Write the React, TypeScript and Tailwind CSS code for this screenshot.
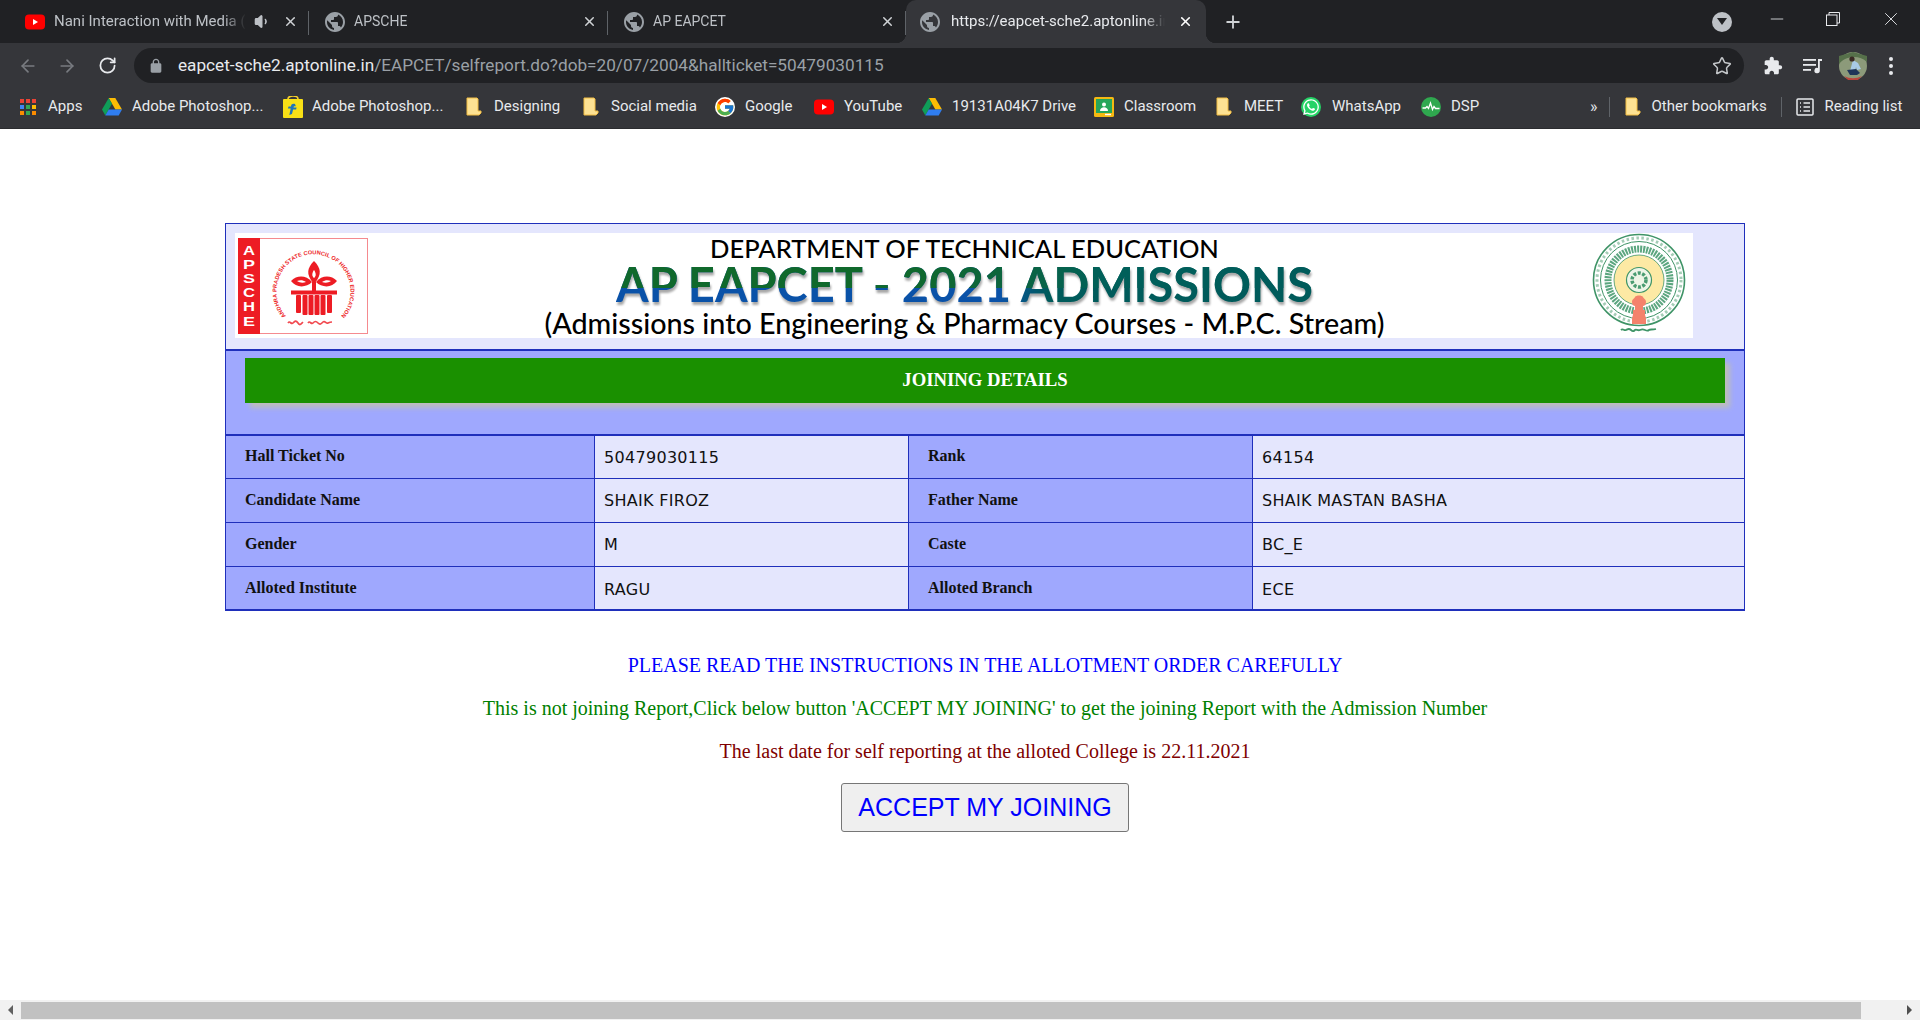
import type { ReactNode } from "react";
import { ArrowLeft, ArrowRight, RotateCw, Star, X, Plus, Minus, Volume1 } from "lucide-react";
import { FcGoogle } from "react-icons/fc";
import { FaWhatsapp } from "react-icons/fa";

const chromeFont = "font-['Roboto',sans-serif]";

function Globe() {
  return (
    <svg viewBox="2 2 20 20" className="w-5 h-5 shrink-0" fill="#9aa0a6">
      <path d="M12 2C6.48 2 2 6.48 2 12s4.48 10 10 10 10-4.48 10-10S17.52 2 12 2zm-1 17.93c-3.95-.49-7-3.85-7-7.93 0-.62.08-1.21.21-1.79L9 15v1c0 1.1.9 2 2 2v1.93zm6.9-2.54c-.26-.81-1-1.39-1.9-1.39h-1v-3c0-.55-.45-1-1-1H8v-2h2c.55 0 1-.45 1-1V7h2c1.1 0 2-.9 2-2v-.41c2.93 1.19 5 4.06 5 7.41 0 2.08-.8 3.97-2.1 5.39z" />
    </svg>
  );
}

function YouTubeIcon() {
  return (
    <svg viewBox="0 0 20 20" className="w-5 h-5 shrink-0">
      <rect x="0" y="2.5" width="20" height="15" rx="4" fill="#f00" />
      <path d="M8 7l5 3-5 3z" fill="#fff" />
    </svg>
  );
}

function DriveIcon() {
  return (
    <svg viewBox="0 0 20 18" className="w-5 h-[18px] shrink-0">
      <path d="M6.7 0h6.6l6.7 11.6h-6.6z" fill="#fbbc04" />
      <path d="M6.7 0L0 11.6l3.3 5.8L10 5.8z" fill="#0f9d58" />
      <path d="M6.7 11.6H20l-3.3 5.8H3.3z" fill="#2f7df0" />
    </svg>
  );
}

function Folder() {
  return (
    <svg viewBox="0 0 16 19" className="w-4 h-[19px] shrink-0">
      <path d="M1 1h10l1 1v12h3v2l-2 2H1z" fill="#fde293" stroke="#f2bd42" strokeWidth="1" />
    </svg>
  );
}

function FlipkartIcon() {
  return (
    <svg viewBox="0 0 20 22" className="w-5 h-[22px] shrink-0">
      <path d="M5 3c0-4 10-4 10 0" fill="none" stroke="#f7d02c" strokeWidth="1.6" />
      <rect x="0" y="3" width="20" height="19" rx="1" fill="#f8e016" />
      <path d="M12 8c-3-.6-4 .8-4 2.6H5.5l-.6 1.8h2.8L6.3 19l2.7-1 1.1-4.600h3l.5-1.800h-3.100c.1-1.200.8-1.600 2.300-1.300z" fill="#1f74ba" />
    </svg>
  );
}

function ClassroomIcon() {
  return (
    <svg viewBox="0 0 20 20" className="w-5 h-5 shrink-0">
      <rect width="20" height="20" rx="1.5" fill="#f5b912" />
      <rect x="2" y="2" width="16" height="14" fill="#26a65b" />
      <circle cx="10" cy="7.500" r="2" fill="#fff" />
      <path d="M6 14c0-5 8-5 8 0z" fill="#fff" />
      <rect x="11" y="16.800" width="6" height="1.400" fill="#fff" />
    </svg>
  );
}

function WhatsAppIcon() {
  return (
    <span className="w-5 h-5 shrink-0 rounded-full bg-[#25d366] flex items-center justify-center">
      <FaWhatsapp className="w-[18px] h-[18px] text-white" />
    </span>
  );
}

function DspIcon() {
  return (
    <svg viewBox="0 0 20 20" className="w-5 h-5 shrink-0">
      <circle cx="10" cy="10" r="10" fill="#2fa84f" />
      <path d="M1.500 11h3l1.500-1.500 1.500 2 2-5.500 2 6.500 1.500-3 1.500 2h4" fill="none" stroke="#fff" strokeWidth="1.300" />
    </svg>
  );
}

function AppsIcon() {
  const colors = ["#ea4335", "#ea4335", "#ea4335", "#4285f4", "#34a853", "#fbbc04", "#fb8c00", "#34a853", "#fb8c00"];
  return (
    <span className="grid grid-cols-3 gap-[2px] w-4 h-4 shrink-0">
      {colors.map((c, i) => (
        <span key={i} className="block" style={{ backgroundColor: c }} />
      ))}
    </span>
  );
}

type Bookmark = { label: string; icon: ReactNode; itemW: string; iconW: string };

const bookmarks: Bookmark[] = [
  { label: "Apps", icon: <AppsIcon />, itemW: "w-[82px]", iconW: "w-[28px]" },
  { label: "Adobe Photoshop...", icon: <DriveIcon />, itemW: "w-[181px]", iconW: "w-[30px]" },
  { label: "Adobe Photoshop...", icon: <FlipkartIcon />, itemW: "w-[183px]", iconW: "w-[29px]" },
  { label: "Designing", icon: <Folder />, itemW: "w-[117px]", iconW: "w-[28px]" },
  { label: "Social media", icon: <Folder />, itemW: "w-[132px]", iconW: "w-[28px]" },
  { label: "Google", icon: <FcGoogle className="w-5 h-5 shrink-0 bg-white rounded-full" />, itemW: "w-[99px]", iconW: "w-[30px]" },
  { label: "YouTube", icon: <YouTubeIcon />, itemW: "w-[108px]", iconW: "w-[30px]" },
  { label: "19131A04K7 Drive", icon: <DriveIcon />, itemW: "w-[172px]", iconW: "w-[30px]" },
  { label: "Classroom", icon: <ClassroomIcon />, itemW: "w-[122px]", iconW: "w-[30px]" },
  { label: "MEET", icon: <Folder />, itemW: "w-[85px]", iconW: "w-[28px]" },
  { label: "WhatsApp", icon: <WhatsAppIcon />, itemW: "w-[120px]", iconW: "w-[31px]" },
  { label: "DSP", icon: <DspIcon />, itemW: "w-[60px]", iconW: "w-[30px]" },
];

function Tab({ title, icon, extra, wide, size }: { title: string; icon: ReactNode; extra?: ReactNode; wide: string; size: string }) {
  return (
    <div className={`relative flex items-center h-[43px] pl-4 pr-[11px] ${wide}`}>
      {icon}
      <span className={`ml-[9px] flex-1 min-w-0 overflow-hidden whitespace-nowrap text-[#bdc1c6] [mask-image:linear-gradient(to_right,black_88%,transparent)] ${size}`}>
        {title}
      </span>
      {extra}
      <X size={15} strokeWidth={2.4} className="ml-[12px] shrink-0 text-[#d0d3d6]" />
      <span className="absolute right-0 top-[11px] h-[24px] w-px bg-[#5f6368]" />
    </div>
  );
}

function TabStrip() {
  return (
    <div className="flex items-start h-[43px] pl-[9px] bg-[#202124]">
      <Tab
        wide="w-[300px]"
        size="text-[15px]"
        title="Nani Interaction with Media ("
        icon={<YouTubeIcon />}
        extra={<Volume1 size={17} fill="#bdc1c6" className="ml-2 shrink-0 text-[#bdc1c6]" />}
      />
      <Tab wide="w-[299px]" size="text-[14px]" title="APSCHE" icon={<Globe />} />
      <Tab wide="w-[298px]" size="text-[14px]" title="AP EAPCET" icon={<Globe />} />
      <div className="relative flex items-center w-[300px] h-[43px] pl-[14px] pr-[13px] rounded-t-[10px] bg-[#35363a]">
        <span className="absolute -left-[10px] bottom-0 w-[10px] h-[10px] bg-[radial-gradient(circle_at_0_0,transparent_10px,#35363a_10.500px)]" />
        <span className="absolute -right-[10px] bottom-0 w-[10px] h-[10px] bg-[radial-gradient(circle_at_100%_0,transparent_10px,#35363a_10.500px)]" />
        <Globe />
        <span className="ml-[11px] flex-1 min-w-0 overflow-hidden whitespace-nowrap text-[15px] text-[#e8eaed] [mask-image:linear-gradient(to_right,black_90%,transparent)]">
          https://eapcet-sche2.aptonline.in/
        </span>
        <X size={15} strokeWidth={2.6} className="ml-[13px] shrink-0 text-white" />
      </div>
      <Plus size={20} strokeWidth={2.2} className="ml-[17px] mt-[12px] text-[#d0d3d6]" />

      <div className="ml-auto flex items-center h-[43px]">
        <span className="w-5 h-5 rounded-full bg-[#bdc1c6] flex items-center justify-center">
          <span className="w-0 h-0 border-x-[5px] border-x-transparent border-t-[7px] border-t-[#202124]" />
        </span>
        <Minus size={20} strokeWidth={1} className="ml-[35px] mb-[6px] text-[#e8eaed]" />
        <svg viewBox="0 0 14 14" className="ml-[39px] mb-[6px] w-[14px] h-[14px]" fill="none" stroke="#e8eaed" strokeWidth="1">
          <rect x="0.500" y="3" width="10.500" height="10.500" />
          <path d="M3 3V0.500h10.500V11H11" />
        </svg>
        <X size={22} strokeWidth={1} className="ml-[40px] mr-[18px] mb-[6px] text-[#e8eaed]" />
      </div>
    </div>
  );
}

function Toolbar() {
  return (
    <div className="flex items-center h-[45px] bg-[#35363a]">
      <ArrowLeft size={20} strokeWidth={2} className="ml-[18px] text-[#787b80]" />
      <ArrowRight size={20} strokeWidth={2} className="ml-[19px] text-[#787b80]" />
      <RotateCw size={19} strokeWidth={2.2} className="ml-[21px] text-[#e8eaed]" />
      <div className="ml-[17px] flex items-center w-[1610px] h-[35px] rounded-full bg-[#202124]">
        <svg viewBox="0 0 24 24" className="ml-[14px] w-4 h-4" fill="#9aa0a6">
          <path d="M18 8h-1V6c0-2.760-2.240-5-5-5S7 3.240 7 6v2H6c-1.100 0-2 .9-2 2v10c0 1.100.9 2 2 2h12c1.100 0 2-.9 2-2V10c0-1.100-.9-2-2-2zM9 6c0-1.660 1.340-3 3-3s3 1.340 3 3v2H9V6z" />
        </svg>
        <span className="ml-[14px] whitespace-nowrap text-[17.2px] text-[#e8eaed]">
          eapcet-sche2.aptonline.in
          <span className="text-[#9aa0a6]">/EAPCET/selfreport.do?dob=20/07/2004&amp;hallticket=50479030115</span>
        </span>
        <Star size={20} strokeWidth={1.8} className="ml-auto mr-[12px] text-[#c4c7ca]" />
      </div>
      <svg viewBox="0 0 24 24" className="ml-[19px] w-5 h-5" fill="#e8eaed">
        <path d="M20.500 11H19V7c0-1.100-.9-2-2-2h-4V3.500C13 2.120 11.880 1 10.500 1S8 2.120 8 3.500V5H4c-1.100 0-1.990.9-1.990 2v3.800H3.500c1.490 0 2.700 1.210 2.700 2.700s-1.210 2.700-2.700 2.700H2V20c0 1.100.9 2 2 2h3.800v-1.500c0-1.490 1.210-2.700 2.700-2.700 1.490 0 2.700 1.210 2.700 2.700V22H17c1.100 0 2-.9 2-2v-4h1.500c1.380 0 2.500-1.120 2.500-2.500S21.880 11 20.500 11z" />
      </svg>
      <svg viewBox="0 0 20 20" className="ml-[20px] w-5 h-5" fill="#e8eaed">
        <rect x="0" y="3" width="13" height="1.800" />
        <rect x="0" y="8" width="13" height="1.800" />
        <rect x="0" y="13" width="8" height="1.800" />
        <path d="M15 3h4v2h-2.200v9.500a2.700 2.700 0 1 1-1.800-2.500z" />
      </svg>
      <svg viewBox="0 0 28 28" className="ml-[16px] w-7 h-7">
        <circle cx="14" cy="14" r="14" fill="#8c9a7a" />
        <path d="M0 12C6 4 20 2 28 10V4L14 0 0 4z" fill="#56704a" />
        <path d="M14 8l5 3 3 6-4 1-1-3-1 4-5 0z" fill="#a9cbe6" />
        <circle cx="13" cy="7" r="2.600" fill="#3a2a24" />
        <path d="M8 18l9-1 4 4-3 2-7 0z" fill="#1f3559" />
        <path d="M5 24c6 3 12 3 18 0l-4 4H9z" fill="#b9453c" />
      </svg>
      <span className="ml-[22px] flex flex-col gap-[3px]">
        <span className="w-1 h-1 rounded-full bg-[#e8eaed]" />
        <span className="w-1 h-1 rounded-full bg-[#e8eaed]" />
        <span className="w-1 h-1 rounded-full bg-[#e8eaed]" />
      </span>
    </div>
  );
}

function BookmarksBar() {
  return (
    <div className="flex items-center h-[41px] pl-5 pb-[3px] bg-[#35363a] border-b border-[#2b2c2f] text-[15px] text-[#e8eaed]">
      {bookmarks.map((b, i) => (
        <div key={i} className={`flex items-center shrink-0 whitespace-nowrap ${b.itemW}`}>
          <span className={`flex items-center shrink-0 ${b.iconW}`}>{b.icon}</span>
          {b.label}
        </div>
      ))}
      <span className="ml-[109px] text-[16px] leading-none">»</span>
      <span className="ml-[11px] w-px h-[20px] bg-[#5f6368]" />
      <span className="ml-[15px] flex items-center w-[27px]"><Folder /></span>
      <span className="whitespace-nowrap w-[129px]">Other bookmarks</span>
      <span className="w-px h-[20px] bg-[#5f6368]" />
      <svg viewBox="0 0 18 18" className="ml-[14px] w-[18px] h-[18px]" fill="none" stroke="#e8eaed" strokeWidth="1.500">
        <rect x="1" y="1" width="16" height="16" rx="1" />
        <path d="M4 5h1M7.500 5H14M4 9h1M7.500 9H14M4 13h1M7.500 13H14" />
      </svg>
      <span className="ml-[11px] whitespace-nowrap">Reading list</span>
    </div>
  );
}

function ApscheLogo() {
  return (
    <svg viewBox="0 0 130 96" className="ml-[3px] w-[130px] h-[96px] shrink-0">
      <rect x="0.500" y="0.500" width="129" height="95" fill="#fff" stroke="#f58a8f" />
      <rect x="0" y="0" width="22" height="96" fill="#ed1c24" />
      {["A", "P", "S", "C", "H", "E"].map((l, i) => (
        <text
          key={i}
          x="5"
          y={16.6 + i * 14.2}
          textLength="12"
          lengthAdjust="spacingAndGlyphs"
          fill="#fff"
          fontSize="13"
          fontWeight="700"
          fontFamily="Liberation Sans, sans-serif"
        >
          {l}
        </text>
      ))}
      <defs>
        <path id="sealArc" d="M48 78 A37 37 0 1 1 103 78" />
      </defs>
      <text fill="#ed1c24" fontSize="5.600" fontWeight="700" fontFamily="Liberation Sans, sans-serif">
        <textPath href="#sealArc" textLength="170">ANDHRA PRADESH STATE COUNCIL OF HIGHER EDUCATION</textPath>
      </text>
      <g fill="#ed1c24">
        <path d="M76 23c7 7 8 13 1 22h-2c-7-9-6-15 1-22z" />
        <path d="M74 44c-6-7-15-7-21-1c5 7 15 7 21 1z" />
        <path d="M78 44c6-7 15-7 21-1c-5 7-15 7-21 1z" />
        <rect x="74" y="44" width="4" height="10" />
        <rect x="53" y="52.500" width="46" height="4" />
        <rect x="58" y="57" width="5" height="18" rx="1" />
        <rect x="64.500" y="57" width="5" height="20" rx="1" />
        <rect x="70.500" y="57" width="5" height="20" rx="1" />
        <rect x="76.500" y="57" width="5" height="20" rx="1" />
        <rect x="82.500" y="57" width="5" height="20" rx="1" />
        <rect x="89" y="57" width="5" height="18" rx="1" />
      </g>
      <g fill="#fff">
        <path d="M76 32c2 3 2.500 6 0 8c-2.500-2-2-5 0-8z" />
        <path d="M68 44c-3-2-6-2-9-1c3 2 6 2 9 1z" />
        <path d="M84 44c3-2 6-2 9-1c-3 2-6 2-9 1z" />
      </g>
      <path d="M50 85c2-3 3 2 5 0s3-3 5 0s3 1 5-1m5 1c2-3 3 2 5 0s3-2 5 0s3 1 5-1s3 2 5 1s3-1 4-1" fill="none" stroke="#ed1c24" strokeWidth="1.700" opacity="0.8" />
    </svg>
  );
}

function ApEmblem() {
  return (
    <svg viewBox="0 0 100 105" className="mr-[4px] w-[100px] h-[105px] shrink-0">
      <circle cx="50" cy="47" r="45.500" fill="#fff" stroke="#3f9467" strokeWidth="1.600" />
      <circle cx="50" cy="47" r="38.500" fill="none" stroke="#3f9467" strokeWidth="1" />
      <circle cx="50" cy="47" r="42" fill="none" stroke="#7db897" strokeWidth="3" strokeDasharray="2.500 2.500" opacity="0.7" />
      <circle cx="50" cy="47" r="31" fill="none" stroke="#4a9c72" strokeWidth="7" strokeDasharray="2 1" opacity="0.9" />
      <circle cx="50" cy="47" r="25" fill="#fde9a4" stroke="#3f9467" strokeWidth="0.800" />
      <circle cx="50" cy="47" r="12.500" fill="#eef5e8" stroke="#3f9467" strokeWidth="1.200" />
      <circle cx="50" cy="47" r="7" fill="none" stroke="#4a9c72" strokeWidth="3.500" strokeDasharray="3 1.500" />
      <path d="M43 69c0-3 2-3 3-5c1-2 7-2 8 0c1 2 3 2 3 5c0 3-2 4-3 4v4h2v4c0 2 1 3 1 5v5H43v-5c0-2 1-3 1-5v-4h2v-4c-1 0-3-1-3-4z" fill="#f4826c" />
      <path d="M32 97c2-2 3 1 5 0s3-2 5 0s3 1 4 0s3 1 5 0s3-1 5 0s3 1 4 0s3 0 7-1" fill="none" stroke="#3f9467" strokeWidth="1.800" />
    </svg>
  );
}

function Banner() {
  return (
    <div className="flex items-start w-[1458px] h-[105px] bg-white text-black font-['Lato',sans-serif]">
      <div className="self-center flex">
        <ApscheLogo />
      </div>
      <div className="flex-1 pt-[4px] pr-[28px] text-center whitespace-nowrap">
        <div className="text-[25.5px] leading-[22px] font-medium">DEPARTMENT OF TECHNICAL EDUCATION</div>
        <div className="mt-[5px] h-[40px] [filter:drop-shadow(1px_3px_1px_#a8a8a8)]">
          <span className="inline-block text-[47px] leading-[40px] font-bold bg-[linear-gradient(to_right,#10692c_0%,#10692c_42%,#0c6440_58%,#00605a_70%,#005b5b_100%),linear-gradient(to_right,#0a52a8_0%,#0a52a8_55%,#005b5b_62%)] bg-no-repeat [background-size:100%_60%,100%_100%] bg-clip-text text-transparent">
            AP EAPCET - 2021 ADMISSIONS
          </span>
        </div>
        <div className="mt-[6px] text-[28.7px] leading-[26px] font-medium">
          (Admissions into Engineering &amp; Pharmacy Courses - M.P.C. Stream)
        </div>
      </div>
      <ApEmblem />
    </div>
  );
}

const rows = [
  ["Hall Ticket No", "50479030115", "Rank", "64154"],
  ["Candidate Name", "SHAIK FIROZ", "Father Name", "SHAIK MASTAN BASHA"],
  ["Gender", "M", "Caste", "BC_E"],
  ["Alloted Institute", "RAGU", "Alloted Branch", "ECE"],
];

function Label({ children, last }: { children: ReactNode; last: boolean }) {
  return (
    <div className={`flex items-center pl-[19px] bg-[#9fa8fe] text-[16px] font-bold text-[#111] font-['Liberation_Serif',serif] ${last ? "pb-0" : "pb-[2px]"}`}>
      {children}
    </div>
  );
}

function Value({ children, last }: { children: ReactNode; last: boolean }) {
  return (
    <div className={`flex items-center pl-[9px] bg-[#e4e6fd] text-[16px] tracking-[0.3px] text-[#111] font-['DejaVu_Sans',sans-serif] ${last ? "pt-[3px]" : "pt-px"}`}>
      {children}
    </div>
  );
}

function DetailsTable() {
  return (
    <div className="w-[1520px] border border-[#1f2fbb] bg-[#e4e6fd]">
      <div className="h-[125px] pt-[9px] pl-[9px]">
        <Banner />
      </div>
      <div className="border-t-2 border-[#1f2fbb] bg-[#9fa8fe] pt-[7px] pb-[31px] px-[19px]">
        <div className="flex items-center justify-center h-[45px] bg-[#1a9000] shadow-[5px_5px_5px_#bdbdbd] text-[18.7px] font-bold text-white font-['Liberation_Serif',serif]">
          JOINING DETAILS
        </div>
      </div>
      <div className="grid grid-cols-[368px_313px_343px_491px] grid-rows-[42px_43px_43px_42px] gap-px bg-[#1f2fbb] border-t-2 border-b border-[#1f2fbb]">
        {rows.map((r, i) => (
          <div key={r[0]} className="contents">
            <Label last={i === 3}>{r[0]}</Label>
            <Value last={i === 3}>{r[1]}</Value>
            <Label last={i === 3}>{r[2]}</Label>
            <Value last={i === 3}>{r[3]}</Value>
          </div>
        ))}
      </div>
    </div>
  );
}

export default function App() {
  return (
    <div className={`flex flex-col h-screen w-screen overflow-hidden bg-white ${chromeFont}`}>
      <TabStrip />
      <Toolbar />
      <BookmarksBar />

      <main className="flex-1 min-h-0 w-[1970px] pt-[94px] flex flex-col items-center">
        <DetailsTable />

        <div className="mt-[43px] flex flex-col gap-[20px] text-center text-[20px] leading-[23px] font-['Liberation_Serif',serif]">
          <p className="text-[#0000ff]">PLEASE READ THE INSTRUCTIONS IN THE ALLOTMENT ORDER CAREFULLY</p>
          <p className="text-[#008000]">
            This is not joining Report,Click below button 'ACCEPT MY JOINING' to get the joining Report with the Admission Number
          </p>
          <p className="text-[#800000]">The last date for self reporting at the alloted College is 22.11.2021</p>
        </div>

        <button className="mt-[20px] w-[288px] h-[49px] rounded-[3px] border border-[#767676] bg-[#efefef] text-[25px] text-[#0000ff] font-['Liberation_Sans',sans-serif]">
          ACCEPT MY JOINING
        </button>
      </main>

      {/* horizontal scrollbar */}
      <div className="flex items-center h-5 shrink-0 bg-[#f1f1f1]">
        <div className="flex items-center w-[21px] pl-2">
          <span className="w-0 h-0 border-y-[5px] border-y-transparent border-r-[5px] border-r-[#606060]" />
        </div>
        <div className="w-[1840px] h-[17px] mt-px bg-[#c1c1c1]" />
        <div className="flex flex-1 items-center justify-end pr-2">
          <span className="w-0 h-0 border-y-[5px] border-y-transparent border-l-[5px] border-l-[#505050]" />
        </div>
      </div>
    </div>
  );
}
